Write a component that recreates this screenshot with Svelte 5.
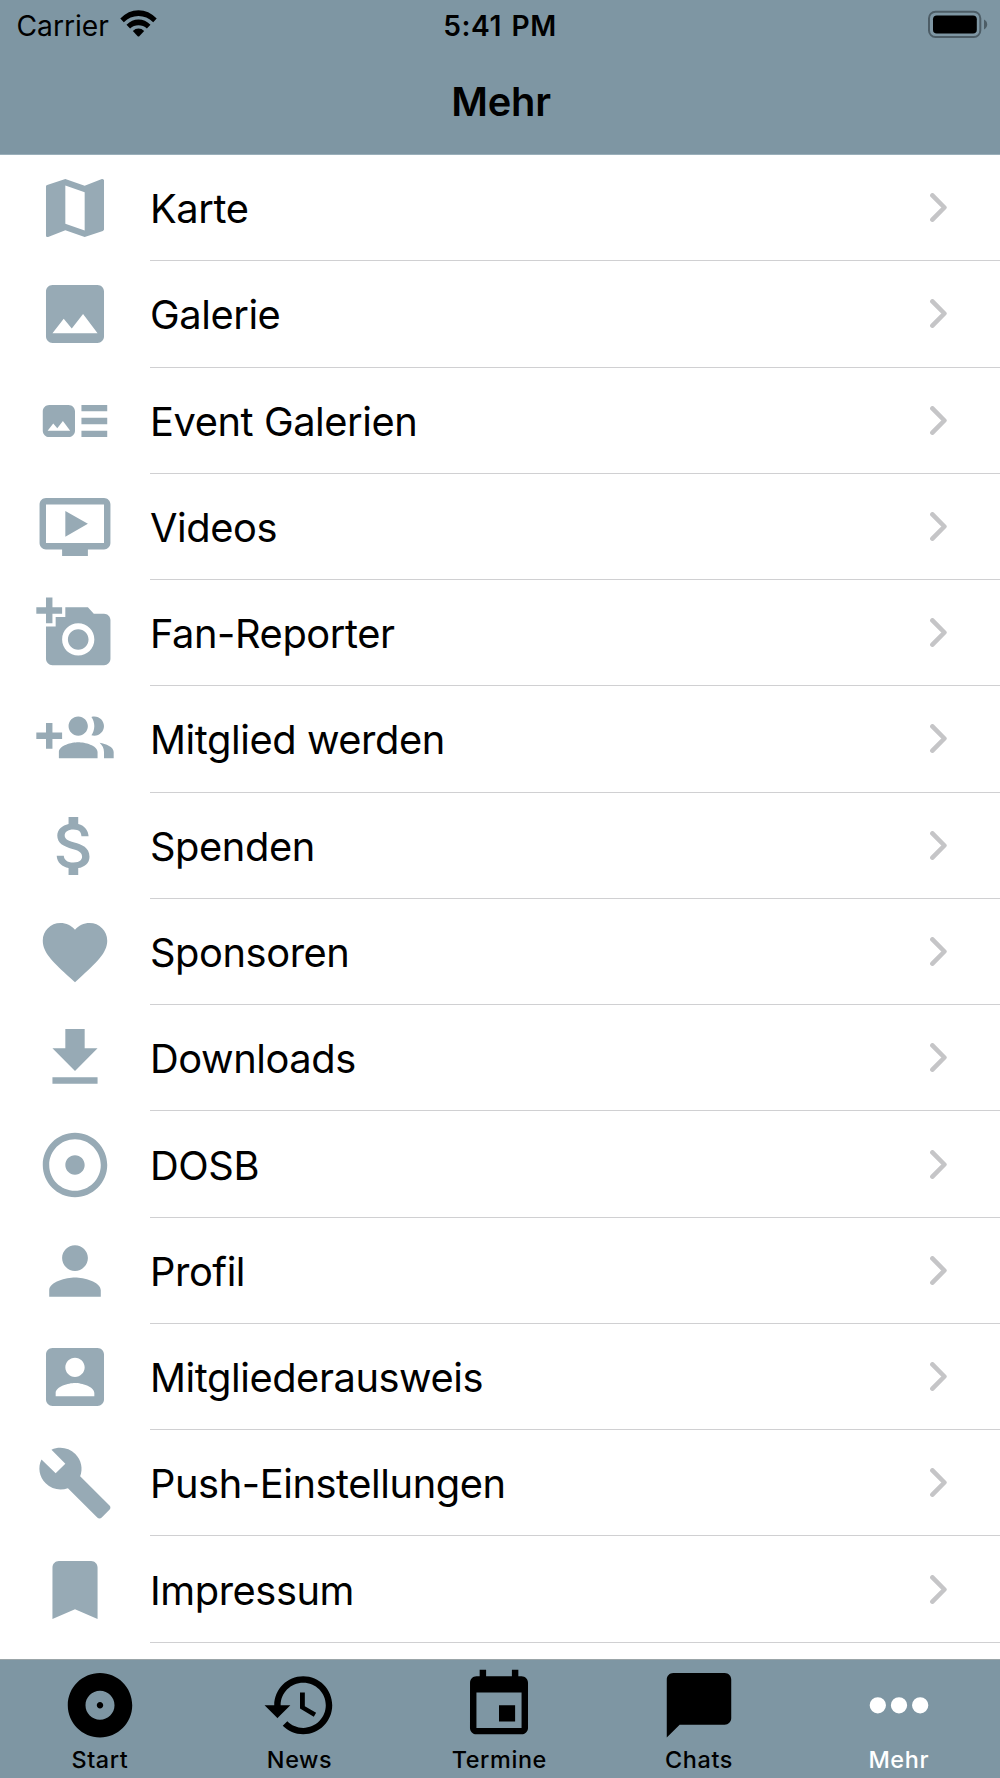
<script>
  const items = [
    { label: 'Karte', icon: 'map' },
    { label: 'Galerie', icon: 'image' },
    { label: 'Event Galerien', icon: 'artTrack' },
    { label: 'Videos', icon: 'video' },
    { label: 'Fan-Reporter', icon: 'addPhoto' },
    { label: 'Mitglied werden', icon: 'groupAdd' },
    { label: 'Spenden', icon: 'money' },
    { label: 'Sponsoren', icon: 'heart' },
    { label: 'Downloads', icon: 'download' },
    { label: 'DOSB', icon: 'adjust' },
    { label: 'Profil', icon: 'person' },
    { label: 'Mitgliederausweis', icon: 'accountBox' },
    { label: 'Push-Einstellungen', icon: 'build' },
    { label: 'Impressum', icon: 'bookmark' }
  ];

  const tabs = [
    { label: 'Start', icon: 'album' },
    { label: 'News', icon: 'history' },
    { label: 'Termine', icon: 'event' },
    { label: 'Chats', icon: 'chat' },
    { label: 'Mehr', icon: 'more' }
  ];

  // 24x24 icon paths
  const icons = {
    map: 'M20.5 3l-.16.03L15 5.1 9 3 3.36 4.9c-.21.07-.36.25-.36.48V20.5c0 .28.22.5.5.5l.16-.03L9 18.9l6 2.1 5.64-1.9c.21-.07.36-.25.36-.48V3.5c0-.28-.22-.5-.5-.5zM15 19l-6-2.11V5l6 2.11V19z',
    image: 'M21 19V5c0-1.1-.9-2-2-2H5c-1.1 0-2 .9-2 2v14c0 1.1.9 2 2 2h14c1.1 0 2-.9 2-2zM8.5 13.5l2.5 3.01L14.5 12l4.5 6H5l3.5-4.5z',
    artTrack: 'M22 13h-8v-2h8v2zm0-6h-8v2h8V7zm-8 10h8v-2h-8v2zm-2-8v6c0 1.1-.9 2-2 2H4c-1.1 0-2-.9-2-2V9c0-1.1.9-2 2-2h6c1.1 0 2 .9 2 2zm-1.5 6l-2.25-3-1.75 2.26-1.25-1.51L3.5 15h7z',
    video: 'M21 3H3c-1.11 0-2 .89-2 2v12c0 1.1.89 2 2 2h5v2h8v-2h5c1.1 0 1.99-.9 1.99-2L23 5c0-1.11-.9-2-2-2zm0 14H3V5h18v12zm-5-6l-7 4V7z',
    addPhoto: 'M3 4V1h2v3h3v2H5v3H3V6H0V4h3zm3 6V7h3V4h7l1.83 2H21c1.1 0 2 .9 2 2v12c0 1.1-.9 2-2 2H5c-1.1 0-2-.9-2-2V10h3zm7 9c2.76 0 5-2.24 5-5s-2.24-5-5-5-5 2.24-5 5 2.24 5 5 5zm-3.2-5c0 1.77 1.43 3.2 3.2 3.2s3.2-1.43 3.2-3.2-1.43-3.2-3.2-3.2-3.2 1.43-3.2 3.2z',
    groupAdd: 'M8 10H5V7H3v3H0v2h3v3h2v-3h3v-2zm10 1c1.66 0 2.99-1.34 2.99-3S19.66 5 18 5c-.32 0-.63.05-.91.14.57.81.9 1.79.9 2.86s-.34 2.04-.9 2.86c.28.09.59.14.91.14zm-5 0c1.66 0 2.99-1.34 2.99-3S14.66 5 13 5c-1.66 0-3 1.34-3 3s1.34 3 3 3zm6.62 2.16c.83.73 1.38 1.66 1.38 2.84v2h3v-2c0-1.54-2.37-2.49-4.38-2.84zM13 13c-2 0-6 1-6 3v2h12v-2c0-2-4-3-6-3z',
    money: 'M11.8 10.9c-2.27-.59-3-1.2-3-2.15 0-1.09 1.01-1.85 2.7-1.85 1.78 0 2.44.85 2.5 2.1h2.21c-.07-1.72-1.12-3.3-3.21-3.81V3h-3v2.16c-1.94.42-3.5 1.68-3.5 3.61 0 2.31 1.91 3.46 4.7 4.13 2.5.6 3 1.48 3 2.41 0 .69-.49 1.79-2.7 1.79-2.06 0-2.87-.92-2.98-2.1h-2.2c.12 2.19 1.76 3.42 3.68 3.83V21h3v-2.15c1.95-.37 3.5-1.5 3.5-3.55 0-2.84-2.43-3.81-4.7-4.4z',
    heart: 'M12 21.35l-1.45-1.32C5.4 15.36 2 12.28 2 8.5 2 5.42 4.42 3 7.5 3c1.74 0 3.41.81 4.5 2.09C13.09 3.81 14.76 3 16.5 3 19.58 3 22 5.42 22 8.5c0 3.78-3.4 6.86-8.55 11.54L12 21.35z',
    download: 'M19 9h-4V3H9v6H5l7 7 7-7zM5 18v2h14v-2H5z',
    adjust: 'M12 2C6.49 2 2 6.49 2 12s4.49 10 10 10 10-4.49 10-10S17.51 2 12 2zm0 18c-4.41 0-8-3.59-8-8s3.59-8 8-8 8 3.59 8 8-3.59 8-8 8zm3-8c0 1.66-1.34 3-3 3s-3-1.34-3-3 1.34-3 3-3 3 1.34 3 3z',
    person: 'M12 12c2.21 0 4-1.79 4-4s-1.79-4-4-4-4 1.79-4 4 1.79 4 4 4zm0 2c-2.67 0-8 1.34-8 4v2h16v-2c0-2.66-5.33-4-8-4z',
    accountBox: 'M3 5v14c0 1.1.89 2 2 2h14c1.1 0 2-.9 2-2V5c0-1.1-.9-2-2-2H5c-1.11 0-2 .9-2 2zm12 4c0 1.66-1.34 3-3 3s-3-1.34-3-3 1.34-3 3-3 3 1.34 3 3zm-9 8c0-2 4-3.1 6-3.1s6 1.1 6 3.1v1H6v-1z',
    build: 'M22.7 19l-9.1-9.1c.9-2.3.4-5-1.5-6.9-2-2-5-2.4-7.4-1.3L9 6 6 9 1.6 4.7C.4 7.1.9 10.1 2.9 12.1c1.9 1.9 4.6 2.4 6.9 1.5l9.1 9.1c.4.4 1 .4 1.4 0l2.3-2.3c.5-.4.5-1.1.1-1.4z',
    bookmark: 'M17 3H7c-1.1 0-1.99.9-1.99 2L5 21l7-3 7 3V5c0-1.1-.9-2-2-2z',
    album: 'M12 2C6.48 2 2 6.48 2 12s4.48 10 10 10 10-4.48 10-10S17.52 2 12 2zm0 14.5c-2.49 0-4.5-2.01-4.5-4.5S9.51 7.5 12 7.5s4.5 2.01 4.5 4.5-2.01 4.5-4.5 4.5zm0-5.5c-.55 0-1 .45-1 1s.45 1 1 1 1-.45 1-1-.45-1-1-1z',
    history: 'M13 3c-4.97 0-9 4.03-9 9H1l3.89 3.89.07.14L9 12H6c0-3.87 3.13-7 7-7s7 3.13 7 7-3.13 7-7 7c-1.93 0-3.68-.79-4.94-2.06l-1.42 1.42C8.27 19.99 10.51 21 13 21c4.97 0 9-4.03 9-9s-4.03-9-9-9zm-1 5v5l4.28 2.54.72-1.21-3.5-2.08V8H12z',
    event: 'M17 12h-5v5h5v-5zM16 1v2H8V1H6v2H5c-1.11 0-1.99.9-1.99 2L3 19c0 1.1.89 2 2 2h14c1.1 0 2-.9 2-2V5c0-1.1-.9-2-2-2h-1V1h-2zm3 18H5V8h14v11z',
    chat: 'M20 2H4c-1.1 0-2 .9-2 2v18l4-4h14c1.1 0 2-.9 2-2V4c0-1.1-.9-2-2-2z',
    more: 'M5.43 9.47a2.53 2.53 0 1 0 0 5.06 2.53 2.53 0 0 0 0-5.06zM12 9.47a2.53 2.53 0 1 0 0 5.06 2.53 2.53 0 0 0 0-5.06zM18.57 9.47a2.53 2.53 0 1 0 0 5.06 2.53 2.53 0 0 0 0-5.06z'
  };

  let active = $state('Mehr');
</script>

<div class="screen">
  <header class="header">
    <div class="status-bar">
      <div class="carrier">
        <span>Carrier</span>
        <svg class="wifi" viewBox="0 0 37 28" aria-hidden="true">
          <path d="M.3 8.6Q8.2 .2 18.5 .2T36.7 8.6L33.2 12.2Q26.8 6.1 18.5 6.1T3.8 12.2Z" />
          <path d="M6.5 14.8Q11.8 9.4 18.5 9.4T30.5 14.8L26.9 18.4Q23.3 15.2 18.5 15.2T10.1 18.4Z" />
          <path d="M12.8 21Q15.4 18.6 18.5 18.6T24.2 21L19.3 26.2Q18.5 27 17.7 26.2Z" />
        </svg>
      </div>
      <div class="time">5:41 PM</div>
      <svg class="battery" viewBox="0 -0.7 60 28" aria-hidden="true">
        <rect class="shell" x="1" y="1" width="51.3" height="25.3" rx="6.5" />
        <rect x="5" y="4.8" width="43.8" height="18" rx="3.8" />
        <path class="nub" d="M56 8.9q3.2 1.7 3.2 4.9T56 18.7z" />
      </svg>
    </div>
    <h1 class="title">Mehr</h1>
  </header>

  <ul class="menu">
    {#each items as item}
      <li class="row">
        <svg class="icon" viewBox="-0.1 -0.1 24.2 24.2" aria-hidden="true">
          <path d={icons[item.icon]} />
        </svg>
        <div class="row-body">
          <span class="label">{item.label}</span>
          <svg class="chevron" viewBox="0 0 17 29" aria-hidden="true">
            <path d="M2.4 2.4L14.4 14.5 2.4 26.6" />
          </svg>
        </div>
      </li>
    {/each}
  </ul>

  <nav class="tab-bar">
    {#each tabs as tab}
      <button class="tab" class:active={active === tab.label} onclick={() => (active = tab.label)}>
        <svg class="icon" viewBox="-0.1 -0.2 24.2 24.2" aria-hidden="true">
          <path d={icons[tab.icon]} />
        </svg>
        <span>{tab.label}</span>
      </button>
    {/each}
  </nav>
</div>

<style>
:global(body) {
  margin: 0;
  background: #fff;
}
.screen {
  display: flex;
  flex-direction: column;
  width: 1000px;
  height: 1778px;
  overflow: hidden;
  font-family: Inter, "Liberation Sans", sans-serif;
  color: #000;
  background: #fff;
}

.header {
  flex: none;
  box-sizing: border-box;
  height: 155px;
  background: #7e96a3;
  border-bottom: 1px solid #9aafba;
}
.status-bar {
  display: grid;
  grid-template-columns: 1fr auto 1fr;
  align-items: center;
  box-sizing: border-box;
  height: 48.3px;
  padding: 0 12.5px 0 16.5px;
  font-size: 28.2px;
  line-height: 34px;
}
.carrier {
  display: flex;
  align-items: center;
  gap: 11px;
}
.carrier span,
.time {
  padding-top: 3px;
}
.wifi {
  width: 37px;
  height: 28px;
}
.time {
  margin-right: 4px;
  font-weight: 600;
  letter-spacing: 0.5px;
  word-spacing: 2px;
}
.battery {
  width: 60px;
  height: 28px;
  justify-self: end;
}
.battery .shell {
  fill: none;
  stroke: #4d5d66;
  stroke-width: 2;
}
.battery .nub {
  fill: #4d5d66;
}
.title {
  margin: 0;
  padding: 1px 0 0 2px;
  font-size: 39.8px;
  font-weight: 600;
  line-height: 106px;
  letter-spacing: -0.2px;
  text-align: center;
}

.menu {
  flex: 1;
  min-height: 0;
  margin: 0;
  padding: 0;
  list-style: none;
  overflow: hidden;
}
.row {
  display: flex;
  align-items: center;
  height: 106.28px;
  padding-left: 36px;
}
.icon {
  flex: none;
  width: 78px;
  height: 78px;
  fill: currentColor;
}
.row .icon {
  color: #97aab5;
}
.row-body {
  flex: 1;
  display: flex;
  align-items: center;
  justify-content: space-between;
  box-sizing: border-box;
  height: 100%;
  margin-left: 36px;
  padding-right: 53px;
  border-bottom: 1px solid #d0d0d2;
}
.label {
  padding-top: 3px;
  font-size: 39.8px;
  line-height: 48px;
  letter-spacing: -0.42px;
  white-space: nowrap;
}
.chevron {
  width: 17px;
  height: 29px;
  fill: none;
  stroke: #c5c5c7;
  stroke-width: 4.6;
  stroke-linecap: round;
  stroke-linejoin: round;
}

.tab-bar {
  flex: none;
  display: flex;
  box-sizing: border-box;
  height: 119px;
  padding-right: 1.4px;
  background: #7e96a3;
  border-top: 1px solid #9ba5a8;
}
.tab {
  flex: 1;
  display: flex;
  flex-direction: column;
  align-items: center;
  padding: 6px 0 0;
  border: none;
  background: none;
  color: #000;
  font-family: inherit;
  font-size: 23.4px;
  font-weight: 450;
  line-height: 24px;
  letter-spacing: 0.6px;
  cursor: pointer;
}
.tab span {
  margin-top: 4px;
}
.tab.active {
  color: #fff;
}
</style>
